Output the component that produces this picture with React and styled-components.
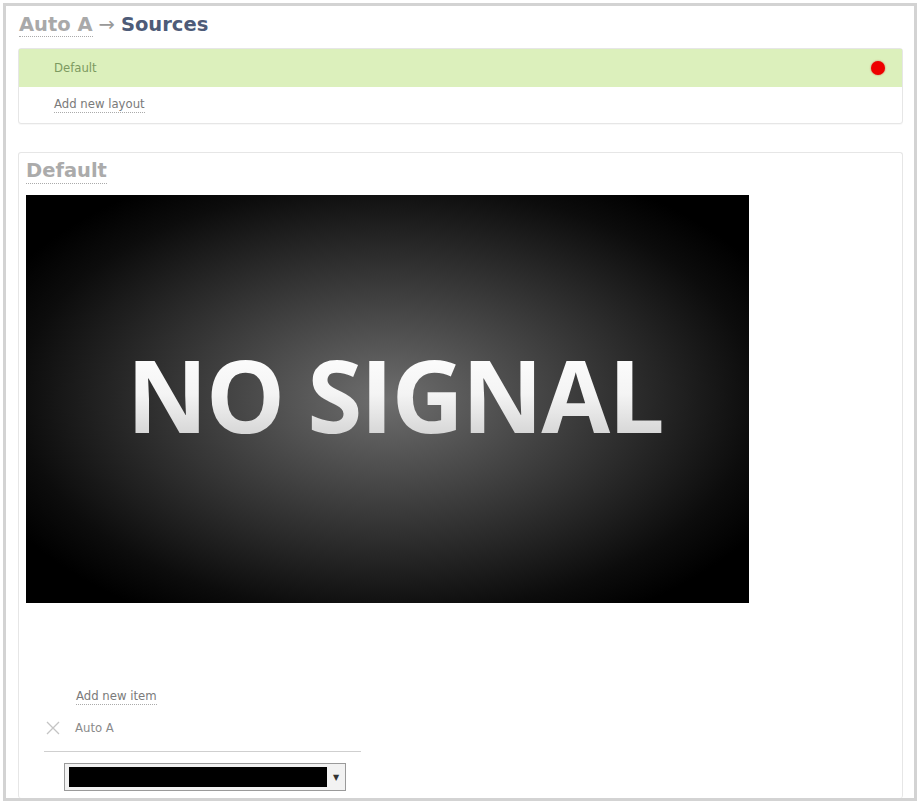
import React from 'react'
import styled, { createGlobalStyle } from 'styled-components'

const GlobalStyle = createGlobalStyle`
  html, body {
    margin: 0;
    padding: 0;
    background: #fff;
  }
  body {
    padding: 3px;
    font-family: "DejaVu Sans", Verdana, sans-serif;
  }
`

const Frame = styled.div`
  box-sizing: border-box;
  width: 914px;
  height: 798px;
  border: 3px solid #d3d3d3;
  padding: 0 11px 0 12px;
  display: flex;
  flex-direction: column;
  overflow: hidden;
`

const Title = styled.h1`
  margin: 6px 0 0 1px;
  height: 36px;
  font-size: 19.5px;
  font-weight: bold;
  line-height: 26px;
  color: #4d5b78;
`

const Crumb = styled.span`
  color: #a9a9a9;
  border-bottom: 1px dotted #aaa;
`

const Arrow = styled.span`
  color: #999;
  font-weight: normal;
  margin: 0 6px;
`

const Card = styled.div`
  border: 1px solid #e6e6e6;
  border-radius: 3px;
  background: #fff;
  box-shadow: 0 1px 1px rgba(0, 0, 0, 0.03);
`

const Layouts = styled(Card)`
  margin-bottom: 28px;
`

const LayoutRow = styled.div`
  display: flex;
  align-items: center;
  justify-content: space-between;
  height: ${p => p.h}px;
  padding: 0 17px 0 35px;
  background: ${p => (p.active ? '#dcf0bc' : 'transparent')};
  font-size: 11.7px;
  color: ${p => (p.active ? '#7c9a60' : '#7a7a7a')};
`

const Dotted = styled.span`
  border-bottom: 1px dotted #aaa;
  padding-bottom: 1px;
`

const LiveDot = styled.span`
  width: 14px;
  height: 14px;
  border-radius: 50%;
  background: #ee0000;
  box-shadow: 0 0 2px rgba(200, 0, 0, 0.6);
`

const Editor = styled(Card)`
  flex: 1;
  padding: 6px 7px 0 7px;
  border-bottom: none;
`

const Heading = styled.h2`
  margin: 0 0 8px 0;
  height: 28px;
  font-size: 19.5px;
  font-weight: bold;
  line-height: 24px;
  color: #ababab;
  span {
    border-bottom: 1px dotted #aaa;
    padding-bottom: 1px;
  }
`

const Screen = styled.div`
  width: 723px;
  height: 408px;
  display: flex;
  align-items: center;
  justify-content: center;
  background: radial-gradient(ellipse 60% 62% at 50% 50%, #6e6e6e 0%, #3a3a3a 45%, #0c0c0c 85%, #000 100%);
`

const NoSignal = styled.div`
  font-family: "Open Sans", "Noto Sans", sans-serif;
  font-weight: bold;
  font-size: 100px;
  letter-spacing: -2px;
  line-height: 1;
  margin: 0 0 10px 14px;
  background: linear-gradient(#ffffff 0%, #f4f4f4 50%, #cfcfcf 100%);
  -webkit-background-clip: text;
  background-clip: text;
  color: transparent;
`

const Items = styled.div`
  margin-top: 83px;
  padding-left: 18px;
  width: 317px;
  font-size: 11.7px;
  color: #8a8a8a;
`

const AddItem = styled.div`
  padding-left: 32px;
  height: 22px;
  line-height: 20px;
  color: #7a7a7a;
`

const ItemRow = styled.div`
  display: flex;
  align-items: flex-start;
  gap: 15px;
  height: 30px;
  padding: 13px 0 0 2px;
  line-height: 14px;
  border-bottom: 1px solid #cfcfcf;
`

const Select = styled.div`
  margin: 11px 0 0 20px;
  width: 282px;
  height: 28px;
  box-sizing: border-box;
  border: 1px solid #9a9a9a;
  background: #f2f2f2;
  padding: 3px 2px 3px 4px;
  display: flex;
  gap: 2px;
`

const SelectValue = styled.div`
  flex: 1;
  background: #000;
`

const SelectArrow = styled.div`
  width: 14px;
  display: flex;
  align-items: center;
  justify-content: center;
  font-size: 8px;
  color: #333;
`

const Cross = () => (
  <svg width="14" height="14" viewBox="0 0 14 14">
    <path d="M1 1 L13 13 M13 1 L1 13" stroke="#c4c4c4" strokeWidth="1.3" />
  </svg>
)

export default function App() {
  return (
    <>
      <GlobalStyle />
      <Frame>
        <Title>
          <Crumb>Auto A</Crumb>
          <Arrow>→</Arrow>
          Sources
        </Title>
        <Layouts>
          <LayoutRow active h={38}>
            <span>Default</span>
            <LiveDot />
          </LayoutRow>
          <LayoutRow h={36}>
            <Dotted>Add new layout</Dotted>
          </LayoutRow>
        </Layouts>
        <Editor>
          <Heading>
            <span>Default</span>
          </Heading>
          <Screen>
            <NoSignal>NO SIGNAL</NoSignal>
          </Screen>
          <Items>
            <AddItem>
              <Dotted>Add new item</Dotted>
            </AddItem>
            <ItemRow>
              <Cross />
              <span>Auto A</span>
            </ItemRow>
            <Select>
              <SelectValue />
              <SelectArrow>▼</SelectArrow>
            </Select>
          </Items>
        </Editor>
      </Frame>
    </>
  )
}
